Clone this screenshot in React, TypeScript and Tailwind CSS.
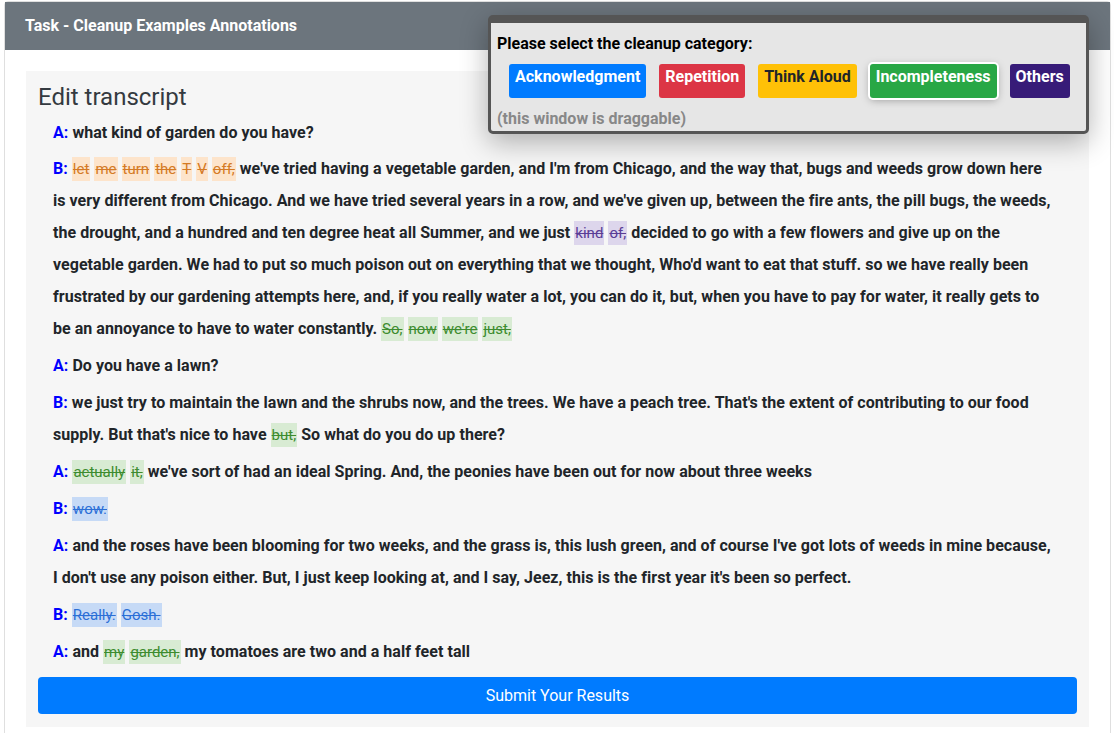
import React from 'react'

type Mark = { c: 'o' | 'p' | 'g' | 'b'; w: string[] }
type Part = string | Mark

const markStyle: Record<Mark['c'], string> = {
  o: 'bg-[#fde4cb] text-[#d47a25] decoration-[#d47a25]',
  p: 'bg-[#ddd6ec] text-[#5a3d96] decoration-[#5a3d96]',
  g: 'bg-[#d8ebd3] text-[#3d8c2f] decoration-[#3d8c2f]',
  b: 'bg-[#c6daf6] text-[#2b6fd6] decoration-[#2b6fd6]',
}

const turns: { s: string; parts: Part[] }[] = [
  { s: 'A', parts: ['what kind of garden do you have?'] },
  {
    s: 'B',
    parts: [
      { c: 'o', w: ['let', 'me', 'turn', 'the', 'T', 'V', 'off,'] },
      " we've tried having a vegetable garden, and I'm from Chicago, and the way that, bugs and weeds grow down here is very different from Chicago. And we have tried several years in a row, and we've given up, between the fire ants, the pill bugs, the weeds, the drought, and a hundred and ten degree heat all Summer, and we just ",
      { c: 'p', w: ['kind', 'of,'] },
      " decided to go with a few flowers and give up on the vegetable garden. We had to put so much poison out on everything that we thought, Who'd want to eat that stuff. so we have really been frustrated by our gardening attempts here, and, if you really water a lot, you can do it, but, when you have to pay for water, it really gets to be an annoyance to have to water constantly. ",
      { c: 'g', w: ['So,', 'now', "we're", 'just,'] },
    ],
  },
  { s: 'A', parts: ['Do you have a lawn?'] },
  {
    s: 'B',
    parts: [
      "we just try to maintain the lawn and the shrubs now, and the trees. We have a peach tree. That's the extent of contributing to our food supply. But that's nice to have ",
      { c: 'g', w: ['but,'] },
      ' So what do you do up there?',
    ],
  },
  {
    s: 'A',
    parts: [
      { c: 'g', w: ['actually', 'it,'] },
      " we've sort of had an ideal Spring. And, the peonies have been out for now about three weeks",
    ],
  },
  { s: 'B', parts: [{ c: 'b', w: ['wow.'] }] },
  {
    s: 'A',
    parts: [
      "and the roses have been blooming for two weeks, and the grass is, this lush green, and of course I've got lots of weeds in mine because, I don't use any poison either. But, I just keep looking at, and I say, Jeez, this is the first year it's been so perfect.",
    ],
  },
  { s: 'B', parts: [{ c: 'b', w: ['Really.', 'Gosh.'] }] },
  {
    s: 'A',
    parts: ['and ', { c: 'g', w: ['my', 'garden,'] }, ' my tomatoes are two and a half feet tall'],
  },
]

function Marked({ m }: { m: Mark }) {
  return (
    <>
      {m.w.map((w, i) => (
        <React.Fragment key={i}>
          <span className={`py-[3px] px-px text-[15px] tracking-normal font-normal line-through ${markStyle[m.c]}`}>{w}</span>
          {i < m.w.length - 1 ? ' ' : ''}
        </React.Fragment>
      ))}
    </>
  )
}

export default function App() {
  const categories = [
    { label: 'Acknowledgment', cls: 'bg-[#007bff] text-white' },
    { label: 'Repetition', cls: 'bg-[#dc3545] text-white' },
    { label: 'Think Aloud', cls: 'bg-[#ffc107] text-[#212529]' },
    { label: 'Incompleteness', cls: 'bg-[#28a745] text-white ring-2 ring-white shadow-[0_2px_8px_rgba(0,0,0,0.35)]' },
    { label: 'Others', cls: 'bg-[#371b78] text-white' },
  ]

  return (
    <div className="relative min-h-screen bg-white pt-px pl-1 pr-[3px] font-['Roboto',sans-serif] text-[#212529]">
      <div className="border border-[#dfdfdf] rounded-t min-h-[740px]">
        <div className="h-12 bg-[#6c757d] flex items-center px-5 text-white font-bold text-base">
          Task - Cleanup Examples Annotations
        </div>
        <div className="p-[21px]">
          <div className="bg-[#f6f6f6] px-3 pt-3 pb-[13px]">
            <h4 className="text-2xl text-[#343a40] leading-[29px] mb-[5px]">Edit transcript</h4>
            {turns.map((t, i) => (
              <p key={i} className={`ml-[15px] mr-[20px] leading-8 font-bold text-base tracking-[0.04px] ${i === 0 ? 'mb-[4px]' : 'mb-[5px]'}`}>
                <span className="text-[#0000ff]">{t.s}:</span>{' '}
                {t.parts.map((p, j) =>
                  typeof p === 'string' ? <React.Fragment key={j}>{p}</React.Fragment> : <Marked key={j} m={p} />
                )}
              </p>
            ))}
            <button className="mt-[4px] w-full h-[37px] rounded bg-[#007bff] text-white text-base">
              Submit Your Results
            </button>
          </div>
        </div>
      </div>

      {/* draggable category window */}
      <div className="absolute left-[488px] top-[15px] w-[601px] h-[119px] bg-[#e6e6e6] border-[3px] border-t-8 border-[#555] rounded-[5px] shadow-[0_8px_28px_rgba(0,0,0,0.3)] px-[6px] pt-[9px]">
        <div className="font-bold text-base text-black leading-6">Please select the cleanup category:</div>
        <div className="flex gap-[13px] ml-3 mt-[8px]">
          {categories.map((c) => (
            <button key={c.label} className={`h-[34px] px-[6px] pb-[9px] rounded-[3px] font-bold text-base leading-6 ${c.cls}`}>
              {c.label}
            </button>
          ))}
        </div>
        <div className="mt-[9px] font-bold text-base text-[#888] leading-6">(this window is draggable)</div>
      </div>
    </div>
  )
}
